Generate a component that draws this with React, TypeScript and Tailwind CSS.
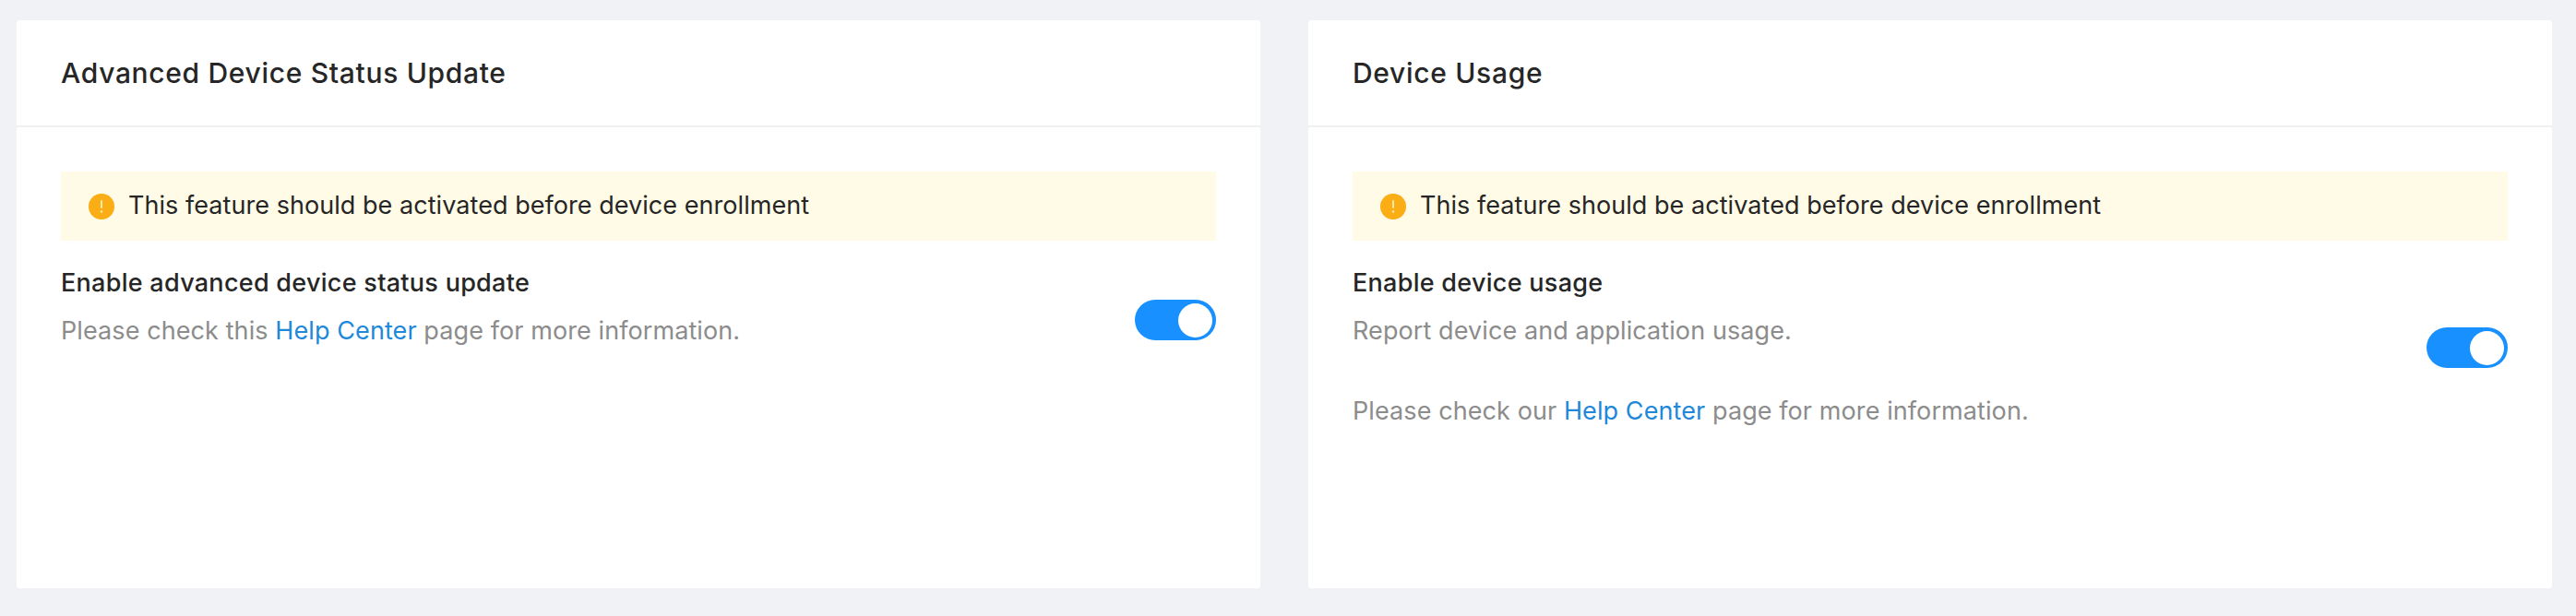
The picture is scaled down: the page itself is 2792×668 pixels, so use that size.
const font = "font-['Inter','Liberation_Sans',sans-serif]"

function WarningIcon() {
  return (
    <svg viewBox="0 0 28 28" className="w-7 h-7 shrink-0">
      <circle cx="14" cy="14" r="14" fill="#faad14" />
      <rect x="13" y="7" width="2" height="9" rx="1" fill="#ffe9a8" />
      <circle cx="14" cy="19.5" r="1.3" fill="#ffe9a8" />
    </svg>
  )
}

function Toggle() {
  return (
    <div className="w-[88px] h-[44px] mb-[4px] rounded-full bg-[#1890ff] flex items-center justify-end pr-[4px] shrink-0">
      <div className="w-[37px] h-[37px] rounded-full bg-white" />
    </div>
  )
}

function HelpLink() {
  return <a className="text-[#2188d9]">Help Center</a>
}

function Card({ title, label, children, className }: { title: string; label: string; children: React.ReactNode; className: string }) {
  return (
    <div className={`bg-white rounded-[3px] flex flex-col ${className}`}>
      <div className="h-[116px] border-b-2 border-[#f0f0f0] px-12 flex items-center text-[30px] font-medium text-[#262626] tracking-[0.68px]">
        {title}
      </div>
      <div className="px-12 pt-12">
        <div className="h-[75px] bg-[#fffbe6] pl-[30px] flex items-center gap-[15px] text-[27px] text-[#262626] tracking-[0.05px]">
          <WarningIcon />
          This feature should be activated before device enrollment
        </div>
        <div className="flex items-center justify-between mt-[25px]">
          <div className="min-h-[126px]">
            <div className="text-[27px] leading-[42px] font-medium text-[#262626] tracking-[0.28px]">{label}</div>
            <div className="text-[27px] leading-[52px] text-[#8c8c8c] tracking-[0.09px] mt-[5px]">{children}</div>
          </div>
          <Toggle />
        </div>
      </div>
    </div>
  )
}

export default function App() {
  return (
    <div className={`w-[2792px] h-[668px] bg-[#f0f2f5] pt-[22px] pl-[18px] pr-[26px] pb-[30px] flex gap-[52px] ${font}`}>
      <Card className="flex-1" title="Advanced Device Status Update" label="Enable advanced device status update">
        <p>Please check this <HelpLink /> page for more information.</p>
      </Card>
      <Card className="flex-1" title="Device Usage" label="Enable device usage">
        <p>Report device and application usage.</p>
        <p className="mt-[35px]">Please check our <HelpLink /> page for more information.</p>
      </Card>
    </div>
  )
}
